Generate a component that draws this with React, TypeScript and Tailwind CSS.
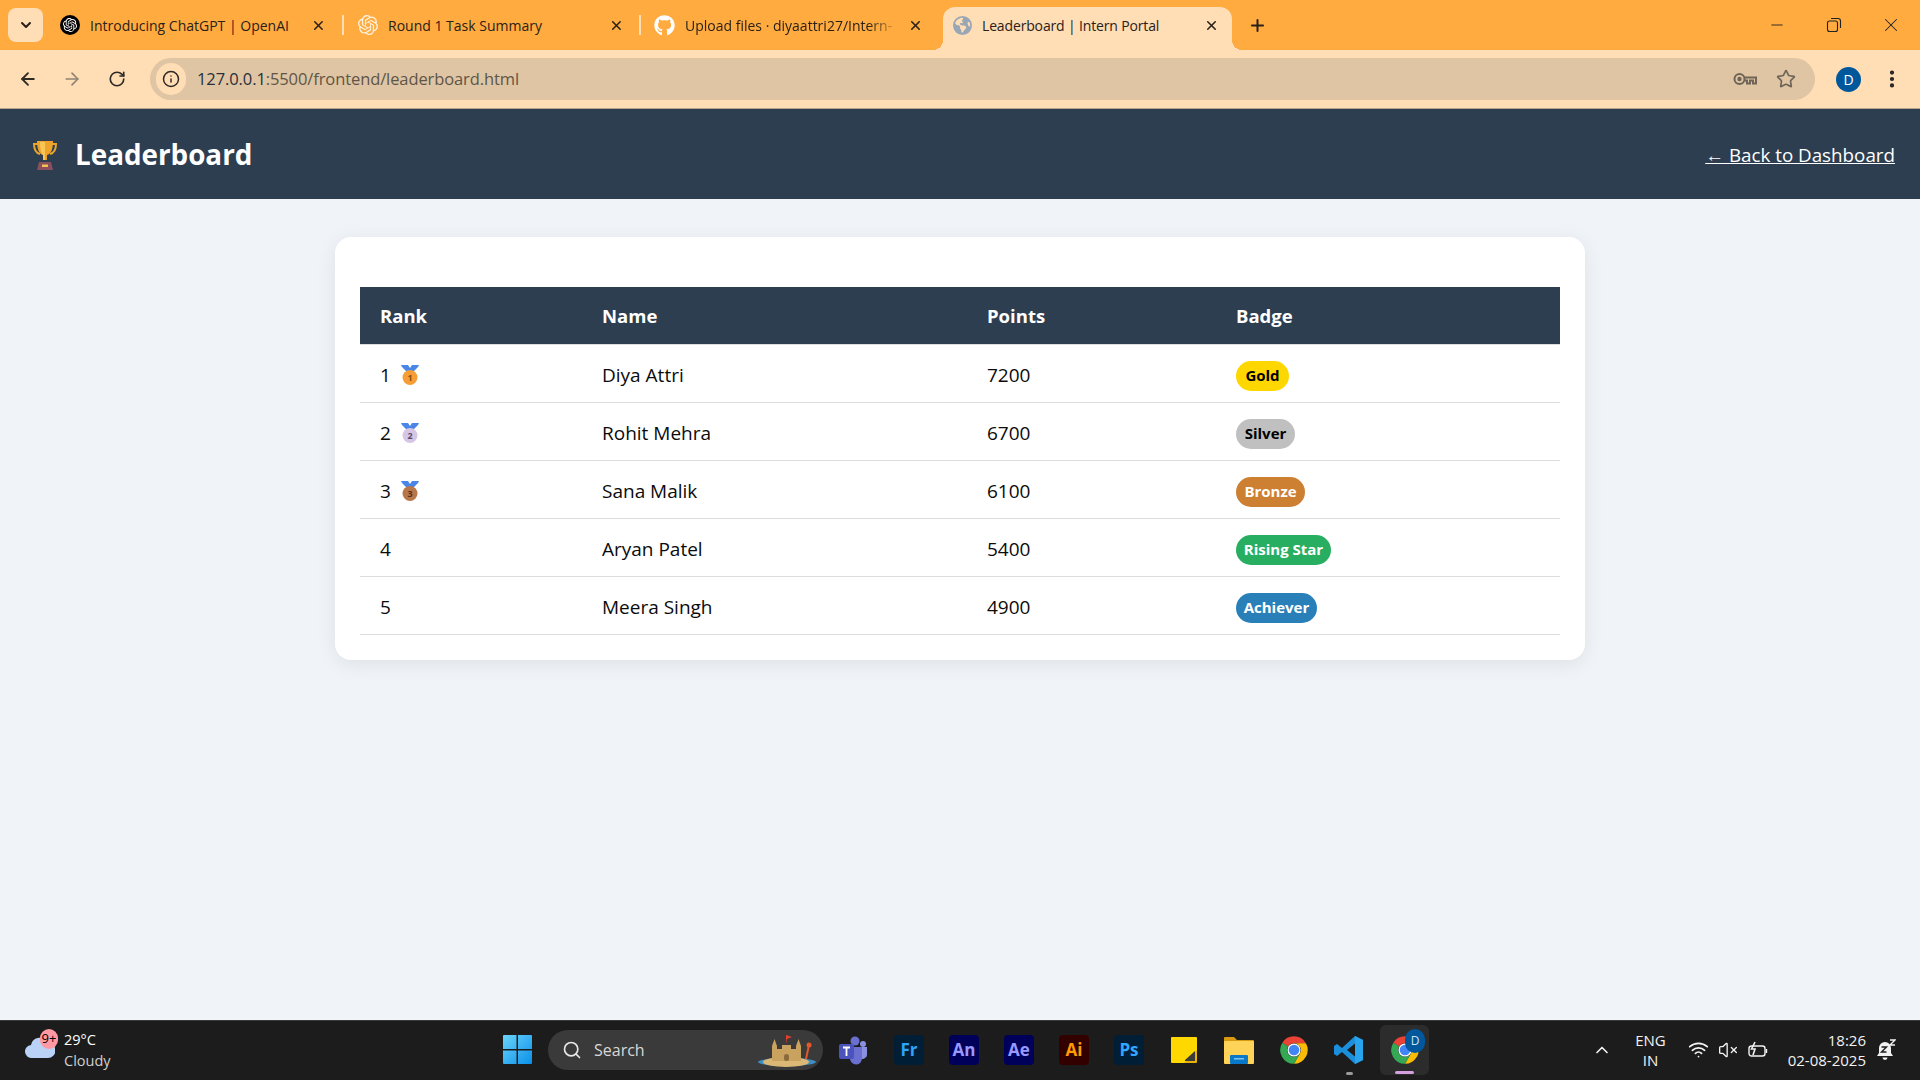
import { ArrowLeft, ArrowRight, ChevronDown, ChevronUp, EllipsisVertical, Info, Minus, Plus, RotateCw, Search, Star, VolumeX, Wifi, X } from "lucide-react";
import { FaGithub } from "react-icons/fa";
import { FaEarthAmericas } from "react-icons/fa6";
import { SiOpenai } from "react-icons/si";

const rows = [
  { rank: 1, medal: { fill: "#f59e36", text: "#8a4b12" }, name: "Diya Attri", points: 7200, badge: "Gold", badgeClass: "w-[53px] bg-[#ffd700] text-black" },
  { rank: 2, medal: { fill: "#d6c6e6", text: "#5c4d70" }, name: "Rohit Mehra", points: 6700, badge: "Silver", badgeClass: "w-[59px] bg-[#c0c0c0] text-black" },
  { rank: 3, medal: { fill: "#b87748", text: "#5a3020" }, name: "Sana Malik", points: 6100, badge: "Bronze", badgeClass: "w-[69px] bg-[#cd7f32] text-white" },
  { rank: 4, name: "Aryan Patel", points: 5400, badge: "Rising Star", badgeClass: "w-[95px] bg-[#27ae60] text-white" },
  { rank: 5, name: "Meera Singh", points: 4900, badge: "Achiever", badgeClass: "w-[81px] bg-[#2980b9] text-white" },
];

function ChromeLogo({ size = 30 }: { size?: number }) {
  return (
    <svg width={size} height={size} viewBox="0 0 48 48">
      <path d="M24 2a22 22 0 0 1 19.05 11H24a11 11 0 0 0-9.5 5.5L5.4 12.2A22 22 0 0 1 24 2z" fill="#ea4335" />
      <path d="M43.05 13A22 22 0 0 1 24 46l9.5-16.5A11 11 0 0 0 33.5 18.5 11 11 0 0 0 24 13z" fill="#fbbc05" />
      <path d="M24 46A22 22 0 0 1 5.4 12.2l9.1 6.3a11 11 0 0 0 0 11A11 11 0 0 0 33.5 29.5z" fill="#34a853" />
      <circle cx="24" cy="24" r="10.5" fill="#fff" />
      <circle cx="24" cy="24" r="8.5" fill="#4285f4" />
    </svg>
  );
}

function AdobeIcon({ label, bg, color }: { label: string; bg: string; color: string }) {
  return (
    <div className={`flex h-[30px] w-[30px] items-center justify-center rounded-[4px] text-[17px] font-bold ${bg} ${color}`}>
      {label}
    </div>
  );
}

function Medal({ fill, text, n }: { fill: string; text: string; n: number }) {
  return (
    <svg width="18" height="20" viewBox="0 0 18 20">
      <path d="M0 0h7l2 3 2-3h7l-1 2-6 6H7L1 2z" fill="#4a86e8" />
      <circle cx="9" cy="12.5" r="7.5" fill={fill} />
      <text x="9" y="16" textAnchor="middle" fontSize="9" fontWeight="700" fill={text}>{n}</text>
    </svg>
  );
}

function Trophy() {
  return (
    <svg width="26" height="30" viewBox="0 0 26 30">
      <path d="M6 4H2c0 6 2 9 6 10M20 4h4c0 6-2 9-6 10" fill="none" stroke="#e6a62c" strokeWidth="2" />
      <path d="M5 1h16c0 8-2 13-6 14v5h-4v-5C7 14 5 9 5 1z" fill="#f0a32a" />
      <path d="M11 15v5h2V2H8c0 6 1 11 3 13z" fill="#f8c557" />
      <path d="M7 22h12l2 8H5z" fill="#8a4f5f" />
      <rect x="10" y="24.5" width="6" height="2.5" fill="#f2c14e" />
    </svg>
  );
}

function Tabs() {
  return (
    <div className="flex h-[50px] items-stretch bg-[#ffab40] pl-2 text-[14px] text-[#2a2118]">
      <div className="mt-2 flex h-[34px] w-[35px] shrink-0 items-center justify-center rounded-lg bg-[#ffddb5]">
        <ChevronDown size={16} strokeWidth={3} />
      </div>
      <div className="ml-[4px] flex w-[297px] items-center pl-[13px]">
        <div className="flex h-5 w-5 shrink-0 items-center justify-center rounded-full bg-black">
          <SiOpenai size={14} color="#fff" />
        </div>
        <span className="ml-[10px] w-[215px] truncate">Introducing ChatGPT | OpenAI</span>
        <X size={15} strokeWidth={2.5} className="ml-[8px]" />
        <div className="ml-[16px] h-5 w-[2px] bg-[#ffddb5]" />
      </div>
      <div className="flex w-[297px] items-center pl-[14px]">
        <SiOpenai size={20} color="#fff3e0" className="shrink-0" />
        <span className="ml-[10px] w-[215px] truncate">Round 1 Task Summary</span>
        <X size={15} strokeWidth={2.5} className="ml-[8px]" />
        <div className="ml-[15px] h-5 w-[2px] bg-[#ffddb5]" />
      </div>
      <div className="flex w-[297px] items-center pl-[13px]">
        <FaGithub size={21} color="#fff" className="shrink-0" />
        <span className="ml-[10px] w-[215px] whitespace-nowrap [mask-image:linear-gradient(to_right,black_85%,transparent)]">
          Upload files · diyaattri27/Intern-
        </span>
        <X size={15} strokeWidth={2.5} className="ml-[8px]" />
      </div>
      <div className="relative ml-[5px] mt-[7px] flex w-[289px] items-center rounded-t-[12px] bg-[#ffddb5] pb-[6px] pl-[10px]">
        <div className="absolute -left-[10px] bottom-0 h-[10px] w-[10px] bg-[radial-gradient(circle_at_0_0,transparent_10px,#ffddb5_10px)]" />
        <div className="absolute -right-[10px] bottom-0 h-[10px] w-[10px] bg-[radial-gradient(circle_at_100%_0,transparent_10px,#ffddb5_10px)]" />
        <FaEarthAmericas size={19} color="#99a6b5" className="shrink-0" />
        <span className="ml-[10px] w-[222px] truncate tracking-[-0.15px]">Leaderboard | Intern Portal</span>
        <X size={15} strokeWidth={2.5} />
      </div>
      <div className="ml-[16px] flex items-center">
        <Plus size={19} strokeWidth={2.5} />
      </div>
      <div className="ml-auto flex items-center text-[#222]">
        <Minus size={18} strokeWidth={1.2} />
        <svg width="16" height="16" viewBox="0 0 16 16" fill="none" stroke="currentColor" strokeWidth="1.1" className="ml-[40px]">
          <rect x="1.5" y="4" width="10" height="10.5" rx="2" />
          <path d="M5 1.5h7a2.5 2.5 0 0 1 2.5 2.5v7" />
        </svg>
        <X size={22} strokeWidth={1.1} className="ml-[38px] mr-[18px]" />
      </div>
    </div>
  );
}

function Toolbar() {
  return (
    <div className="flex h-[59px] items-center border-b border-[#b9a58b] bg-[#ffddb5] pl-[18px]">
      <ArrowLeft size={20} strokeWidth={2.2} color="#2e2a25" />
      <ArrowRight size={20} strokeWidth={2} color="#8f8474" className="ml-[24px]" />
      <RotateCw size={18} strokeWidth={2.2} color="#2e2a25" className="ml-[26px]" />
      <div className="ml-[24px] flex h-[42px] w-[1665px] items-center rounded-full bg-[#dfc5a3] pl-[6px] pr-[19px]">
        <div className="flex h-[32px] w-[30px] items-center justify-center rounded-full bg-[#ffddb5]">
          <Info size={18} strokeWidth={2} color="#2e2a25" />
        </div>
        <span className="ml-[11px] pt-[1px] text-[16.5px] tracking-[-0.1px] text-[#5e5548]">
          <span className="text-[#26303b]">127.0.0.1</span>:5500/frontend/leaderboard.html
        </span>
        <svg width="24" height="14" viewBox="0 0 24 14" fill="none" stroke="#6e6558" strokeWidth="2" className="ml-auto">
          <circle cx="6.5" cy="7" r="5" />
          <circle cx="6.5" cy="7" r="1.2" fill="#6e6558" />
          <path d="M11.5 5.5H23v6h-3V8.5h-3v3h-3V8.5h-2.5" />
        </svg>
        <Star size={20} strokeWidth={2} color="#6e6558" className="ml-[19px]" />
      </div>
      <div className="ml-[21px] flex h-[25px] w-[25px] items-center justify-center rounded-full bg-[#01579b] text-[14px] text-white">D</div>
      <EllipsisVertical size={22} strokeWidth={2.6} color="#222" className="ml-[20px]" />
    </div>
  );
}

function Leaderboard() {
  return (
    <main className="flex-1 bg-[#f0f4f8] pt-[38px]">
      <div className="mx-auto w-[1250px] rounded-2xl bg-white p-[25px] pt-[50px] shadow-[0_4px_20px_rgba(0,0,0,0.08)]">
        <table className="w-full table-fixed border-collapse text-left text-[19px] text-[#0b0b0b]">
          <thead>
            <tr className="h-[57px] border-b border-[#dddddd] bg-[#2c3e50] text-[18.5px] text-white">
              <th className="w-[222px] pl-5 pt-[2px] font-bold">Rank</th>
              <th className="w-[385px] pl-5 pt-[2px] font-bold">Name</th>
              <th className="w-[249px] pl-5 pt-[2px] font-bold">Points</th>
              <th className="pl-5 pt-[2px] font-bold">Badge</th>
            </tr>
          </thead>
          <tbody>
            {rows.map((r) => (
              <tr key={r.rank} className="h-[58px] border-b border-[#dddddd]">
                <td className="pl-5 pt-[4px]">
                  <div className="flex items-center gap-[10px]">
                    {r.rank}
                    {r.medal && <Medal fill={r.medal.fill} text={r.medal.text} n={r.rank} />}
                  </div>
                </td>
                <td className="pl-5 pt-[4px]">{r.name}</td>
                <td className="pl-5 pt-[4px]">{r.points}</td>
                <td className="pl-5 pt-[3px]">
                  <span className={`mt-[2px] flex h-[30px] items-center justify-center rounded-full text-[15px] font-bold ${r.badgeClass}`}>
                    {r.badge}
                  </span>
                </td>
              </tr>
            ))}
          </tbody>
        </table>
      </div>
    </main>
  );
}

function SandCastle() {
  return (
    <svg width="60" height="34" viewBox="0 0 60 34">
      <ellipse cx="30" cy="29" rx="29" ry="4" fill="#3d8fc4" />
      <ellipse cx="29" cy="29" rx="23" ry="5" fill="#dcb877" />
      <path d="M15 28V13l2.5-7 2.5 7v3h5v-4h9v4h5v-3l2.5-7 2.5 7v15z" fill="#c9a25f" />
      <path d="M29 11V2l6 2-5 2" fill="#e53f2f" />
      <rect x="27" y="21" width="5" height="7" rx="2.5" fill="#8a6a3a" />
      <path d="M52 12l-3 14" stroke="#e2582b" strokeWidth="2" />
      <circle cx="52" cy="12" r="2.5" fill="#e2582b" />
    </svg>
  );
}

function Taskbar() {
  return (
    <footer className="flex h-[60px] items-center border-t border-[#3a3a3a] bg-[#1c1c1c] pb-[2px] text-white">
      <div className="flex w-[503px] shrink-0 items-center pl-[25px]">
        <div className="relative mb-[6px] h-[22px] w-[30px]">
          <svg width="30" height="22" viewBox="0 0 30 22">
            <path d="M7 22a6.5 6.5 0 0 1-1-13 9 9 0 0 1 17-2 7.5 7.5 0 0 1 0 15z" fill="#b9d2f5" />
          </svg>
          <div className="absolute -right-[3px] -top-[7px] flex h-[20px] w-[18px] items-center justify-center rounded-full bg-[#ff9aa5] text-[13px] text-black">9+</div>
        </div>
        <div className="ml-[9px] text-[14.5px] leading-[21px]">
          <div>29°C</div>
          <div className="text-[#cfcfcf]">Cloudy</div>
        </div>
      </div>
      <svg width="29" height="29" viewBox="0 0 29 29" className="shrink-0">
        <defs>
          <linearGradient id="win" x1="0" y1="0" x2="1" y2="1">
            <stop offset="0" stopColor="#6ad5fb" />
            <stop offset="1" stopColor="#0a8fe8" />
          </linearGradient>
        </defs>
        <path d="M0 1a1 1 0 0 1 1-1h12.5v13.9H0zM15 0h13a1 1 0 0 1 1 1v12.9H15zM0 15.4h13.5V29H1a1 1 0 0 1-1-1zM15 15.4h14V28a1 1 0 0 1-1 1H15z" fill="url(#win)" />
      </svg>
      <div className="ml-[16px] flex h-[40px] w-[275px] shrink-0 items-center rounded-full bg-[#3a3a3a] pl-[14px] pr-[6px]">
        <Search size={20} strokeWidth={2} color="#e8e8e8" />
        <span className="ml-[12px] text-[16px] text-[#d8d8d8]">Search</span>
        <div className="ml-auto"><SandCastle /></div>
      </div>
      <div className="ml-[15px] flex shrink-0 items-center">
        <svg width="30" height="30" viewBox="0 0 30 30" className="mr-[26px]">
          <circle cx="17" cy="6" r="4.5" fill="#6a6fd0" />
          <circle cx="25" cy="9" r="3" fill="#8a8fe0" />
          <path d="M21 12h8v8a5 5 0 0 1-8 3z" fill="#8a8fe0" />
          <path d="M9 12h15v11a6 6 0 0 1-12 1z" fill="#6a6fd0" />
          <rect x="1" y="9" width="15" height="15" rx="2" fill="#4b53bc" />
          <path d="M5 12.5h7M8.5 12.5V21" stroke="#fff" strokeWidth="1.8" />
        </svg>
        <div className="flex items-center gap-[25px]">
          <AdobeIcon label="Fr" bg="bg-[#001e36]" color="text-[#2fa3f7]" />
          <AdobeIcon label="An" bg="bg-[#00005b]" color="text-[#9999ff]" />
          <AdobeIcon label="Ae" bg="bg-[#00005b]" color="text-[#9999ff]" />
          <AdobeIcon label="Ai" bg="bg-[#330000]" color="text-[#ff9a00]" />
          <AdobeIcon label="Ps" bg="bg-[#001e36]" color="text-[#31a8ff]" />
          <svg width="30" height="30" viewBox="0 0 30 30">
            <path d="M3 2h24a1 1 0 0 1 1 1v16l-9 9H3a1 1 0 0 1-1-1V3a1 1 0 0 1 1-1z" fill="#ffd800" />
            <path d="M28 15v12a1 1 0 0 1-1 1H15z" fill="#e8b200" />
            <path d="M26 16v10H16v-1z" fill="#3b3b3b" />
          </svg>
          <svg width="30" height="30" viewBox="0 0 30 30">
            <path d="M0 3a1 1 0 0 1 1-1h9l3 3h16a1 1 0 0 1 1 1v4H0z" fill="#d99a12" />
            <rect y="6" width="30" height="23" rx="1" fill="#ffd357" />
            <rect x="6" y="20" width="18" height="9" rx="1" fill="#0a78c9" />
            <rect x="10" y="23" width="10" height="1.5" fill="#7cc4f2" />
          </svg>
          <ChromeLogo />
          <div className="relative flex justify-center">
            <svg width="30" height="30" viewBox="0 0 30 30">
              <path d="M21 1l8 4v20l-8 4L8 17l-5 4-3-2v-8l3-2 5 4z" fill="#1b8fdc" />
              <path d="M21 1l8 4v20l-8 4z" fill="#27a4ec" />
              <path d="M21 8.5L13 15l8 6.5z" fill="#1c1c1c" />
            </svg>
            <div className="absolute -bottom-[10px] h-[3px] w-[7px] rounded-full bg-[#9a9a9a]" />
          </div>
        </div>
      </div>
      <div className="relative ml-[16px] flex h-[50px] w-[49px] shrink-0 items-center justify-center rounded-md bg-[#2c2c2c]">
        <ChromeLogo />
        <div className="absolute right-[4px] top-[4px] flex h-[24px] w-[20px] items-center justify-center rounded-full bg-[#01579b] text-[12px] text-[#cfe2f5]">D</div>
        <div className="absolute bottom-[1px] h-[3px] w-[19px] rounded-full bg-[#d6a0e0]" />
      </div>
      <div className="ml-auto flex shrink-0 items-center text-[15px] text-[#f2f2f2]">
        <ChevronUp size={20} strokeWidth={2} />
        <div className="ml-[23px] text-center leading-[20px]">
          <div>ENG</div>
          <div>IN</div>
        </div>
        <Wifi size={21} strokeWidth={2} className="ml-[22px]" />
        <VolumeX size={20} strokeWidth={1.6} className="ml-[9px]" />
        <svg width="20" height="18" viewBox="0 0 20 18" fill="none" stroke="currentColor" strokeWidth="1.4" className="ml-[10px]">
          <rect x="1" y="5" width="16" height="10" rx="2.5" />
          <path d="M18.5 8v4" />
          <path d="M7 1L3.5 8H7l-2 6" strokeWidth="1.6" />
        </svg>
        <div className="ml-[20px] text-right leading-[20px]">
          <div>18:26</div>
          <div>02-08-2025</div>
        </div>
        <svg width="20" height="22" viewBox="0 0 20 22" className="ml-[10px] mr-[24px]">
          <path d="M9 3a6 6 0 0 1 6 6v5l2 3H1l2-3V9a6 6 0 0 1 6-6zM6.5 18.5h5a2.5 2.5 0 0 1-5 0z" fill="#f2f2f2" />
          <path d="M5.5 8h5l-5 5h5" stroke="#1c1c1c" strokeWidth="1.4" fill="none" />
          <path d="M14 1h5l-5 5h5" stroke="#f2f2f2" strokeWidth="1.4" fill="none" />
        </svg>
      </div>
    </footer>
  );
}

export default function App() {
  return (
    <div className="flex min-h-screen flex-col font-['Open_Sans','Noto_Sans',sans-serif]">
      <Tabs />
      <Toolbar />
      <header className="flex h-[90px] items-center bg-[#2c3e50] pl-[32px] pr-[25px] pt-[2px] text-white">
        <Trophy />
        <h1 className="ml-[17px] text-[27.8px] font-bold">Leaderboard</h1>
        <a href="#" className="ml-auto text-[18.8px] underline">← Back to Dashboard</a>
      </header>
      <Leaderboard />
      <Taskbar />
    </div>
  );
}
